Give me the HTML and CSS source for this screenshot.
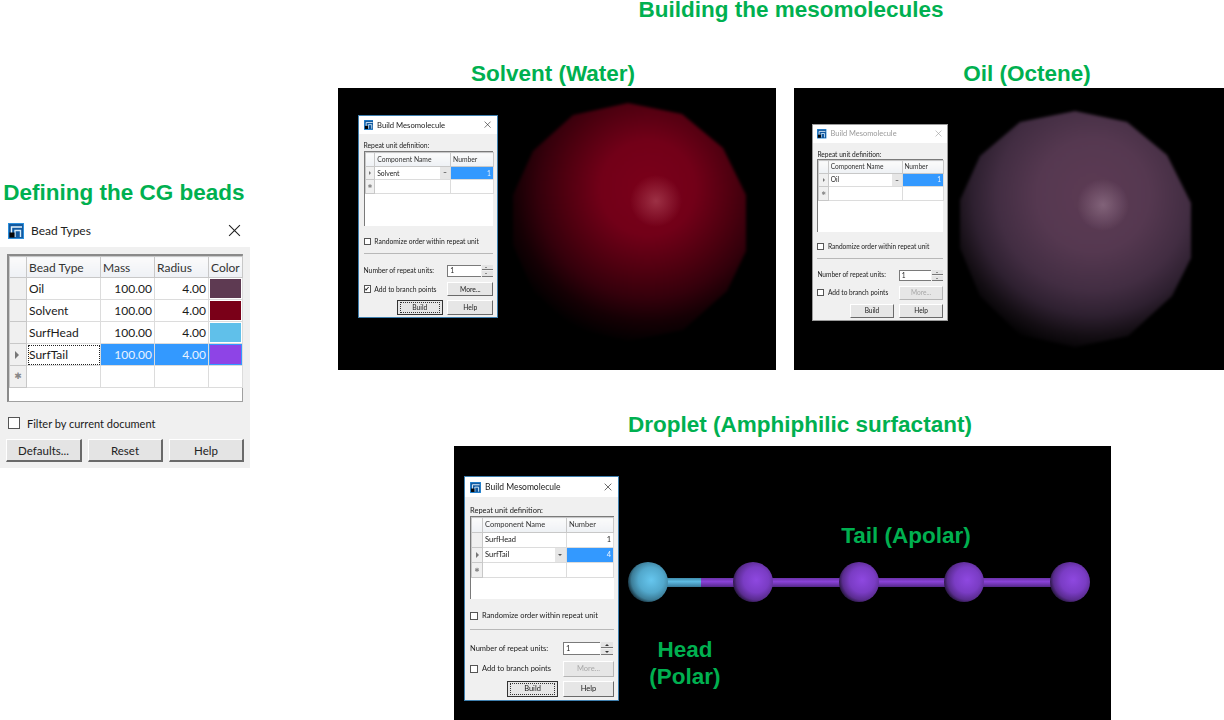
FILE: index.html
```html
<!DOCTYPE html>
<html lang="en">
<head>
  <meta charset="UTF-8" />
  <title>Building the mesomolecules</title>
  <link rel="stylesheet" href="styles.css">
</head>
<body>

  <svg class="sprite" width="0" height="0">
    <symbol id="appIcon" viewBox="0 0 16 16">
      <rect width="16" height="16" fill="#2c8fdc" />
      <rect x="1" y="1" width="14" height="14" fill="#12599f" />
      <path d="M3.5 14V4H14" fill="none" stroke="#e8f4fc" stroke-width="1.4" />
      <path d="M7 14V7.5H12.5V14" fill="none" stroke="#d5ecfa" stroke-width="1.4" />
      <rect x="1.5" y="9.5" width="5" height="5" fill="#050505" />
    </symbol>
    <symbol id="closeIcon" viewBox="0 0 12 12">
      <path d="M1 1L11 11M11 1L1 11" fill="none" stroke="currentColor" stroke-width="1" />
    </symbol>
  </svg>

  <div class="slide">

    <h1 class="caption capMain">Building the mesomolecules</h1>
    <h2 class="caption capBeads">Defining the CG beads</h2>
    <h2 class="caption capSolvent">Solvent (Water)</h2>
    <h2 class="caption capOil">Oil (Octene)</h2>
    <h2 class="caption capDroplet">Droplet (Amphiphilic surfactant)</h2>

    <!-- bead types window -->
    <section class="beadWin">
      <div class="beadTitle">
        <svg class="beadIcon"><use href="#appIcon" /></svg>
        <span class="beadName">Bead Types</span>
        <svg class="beadClose"><use href="#closeIcon" /></svg>
      </div>
      <div class="beadBody">
        <div class="beadGrid">
          <table class="beadTable">
            <colgroup>
              <col class="colHead"><col class="colType"><col class="colMass"><col class="colRadius"><col class="colColor">
            </colgroup>
            <tr class="headRow"><th></th><th>Bead Type</th><th>Mass</th><th>Radius</th><th>Color</th></tr>
            <tr><th></th><td>Oil</td><td class="num">100.00</td><td class="num">4.00</td><td class="swatchCell"><div class="swatch swOil"></div></td></tr>
            <tr><th></th><td>Solvent</td><td class="num">100.00</td><td class="num">4.00</td><td class="swatchCell"><div class="swatch swSolvent"></div></td></tr>
            <tr><th></th><td>SurfHead</td><td class="num">100.00</td><td class="num">4.00</td><td class="swatchCell"><div class="swatch swHead"></div></td></tr>
            <tr><th><span class="rowArrow"></span></th><td class="focusCell">SurfTail</td><td class="num sel">100.00</td><td class="num sel">4.00</td><td class="swatchCell sel"><div class="swatch swTail"></div></td></tr>
            <tr><th><span class="rowNew">✱</span></th><td></td><td></td><td></td><td></td></tr>
          </table>
        </div>
        <label class="filterRow"><span class="check"></span>Filter by current document</label>
        <div class="beadButtons">
          <button class="winBtn">Defaults...</button>
          <button class="winBtn">Reset</button>
          <button class="winBtn">Help</button>
        </div>
      </div>
    </section>

    <!-- solvent viewport -->
    <div class="view viewSolvent">
      <svg class="scene" viewBox="0 0 438 282">
        <defs>
          <radialGradient id="redBody" gradientUnits="userSpaceOnUse" cx="310" cy="100" r="157">
            <stop offset="0" stop-color="#7a0019" />
            <stop offset="0.3" stop-color="#720018" />
            <stop offset="0.55" stop-color="#4c000f" />
            <stop offset="0.7" stop-color="#34000b" />
            <stop offset="0.85" stop-color="#150004" />
            <stop offset="1" stop-color="#000" />
          </radialGradient>
          <radialGradient id="redSpot" gradientUnits="userSpaceOnUse" cx="318" cy="113" r="26">
            <stop offset="0" stop-color="#b04a5c" stop-opacity="0.65" />
            <stop offset="1" stop-color="#b04a5c" stop-opacity="0" />
          </radialGradient>
        </defs>
        <polygon class="ball" fill="url(#redBody)" points="290,15 344,26 385,60 408,107 408,163 389,203 345,242 290,253 235,240 195,203 175,157 175,107 195,63 235,27" />
        <circle cx="318" cy="113" r="26" fill="url(#redSpot)" />
      </svg>
      <div class="slot slotSolvent">
        <div class="dialog dlgSolvent">
          <div class="dlgTitle">
            <svg class="dlgIcon"><use href="#appIcon" /></svg>
            <span class="dlgName">Build Mesomolecule</span>
            <svg class="dlgClose"><use href="#closeIcon" /></svg>
          </div>
          <div class="dlgBody">
            <div class="dlgLabel">Repeat unit definition:</div>
            <div class="unitGrid">
              <table class="unitTable">
                <colgroup><col class="uHead"><col class="uName"><col class="uNum"></colgroup>
                <tr class="headRow"><th></th><th>Component Name</th><th>Number</th></tr>
                <tr><th><span class="rowArrow"></span></th><td class="comboCell">Solvent<span class="comboBtn"></span></td><td class="num sel">1</td></tr>
                <tr><th><span class="rowNew">✱</span></th><td></td><td></td></tr>
              </table>
            </div>
            <label class="checkRow randomRow"><span class="check"></span>Randomize order within repeat unit</label>
            <div class="sep"></div>
            <div class="countRow">
              <span class="countLabel">Number of repeat units:</span>
              <span class="countInput">1</span>
              <span class="spin"><i class="up"></i><i class="down"></i></span>
            </div>
            <div class="branchRow">
              <label class="checkRow"><span class="check checked">✔</span>Add to branch points</label>
              <button class="smallBtn">More...</button>
            </div>
            <div class="actionRow">
              <button class="smallBtn buildBtn focused"><span>Build</span></button>
              <button class="smallBtn">Help</button>
            </div>
          </div>
        </div>
      </div>
    </div>

    <!-- oil viewport -->
    <div class="view viewOil">
      <svg class="scene" viewBox="0 0 430 282">
        <defs>
          <radialGradient id="oilBody" gradientUnits="userSpaceOnUse" cx="299" cy="107" r="160">
            <stop offset="0" stop-color="#5c3a53" />
            <stop offset="0.35" stop-color="#553850" />
            <stop offset="0.6" stop-color="#422d42" />
            <stop offset="0.75" stop-color="#2e2030" />
            <stop offset="0.88" stop-color="#140e14" />
            <stop offset="1" stop-color="#000" />
          </radialGradient>
          <radialGradient id="oilSpot" gradientUnits="userSpaceOnUse" cx="309" cy="117" r="26">
            <stop offset="0" stop-color="#96788e" stop-opacity="0.65" />
            <stop offset="1" stop-color="#96788e" stop-opacity="0" />
          </radialGradient>
        </defs>
        <polygon class="ball" fill="url(#oilBody)" points="281,23 333,34 373,67 397,115 397,170 378,208 334,248 281,259 226,247 186,208 166,160 166,112 186,68 226,34" />
        <circle cx="309" cy="117" r="26" fill="url(#oilSpot)" />
      </svg>
      <div class="slot slotOil">
        <div class="dialog dlgOil">
          <div class="dlgTitle">
            <svg class="dlgIcon"><use href="#appIcon" /></svg>
            <span class="dlgName">Build Mesomolecule</span>
            <svg class="dlgClose"><use href="#closeIcon" /></svg>
          </div>
          <div class="dlgBody">
            <div class="dlgLabel">Repeat unit definition:</div>
            <div class="unitGrid">
              <table class="unitTable">
                <colgroup><col class="uHead"><col class="uName"><col class="uNum"></colgroup>
                <tr class="headRow"><th></th><th>Component Name</th><th>Number</th></tr>
                <tr><th><span class="rowArrow"></span></th><td class="comboCell">Oil<span class="comboBtn"></span></td><td class="num sel">1</td></tr>
                <tr><th><span class="rowNew">✱</span></th><td></td><td></td></tr>
              </table>
            </div>
            <label class="checkRow randomRow"><span class="check"></span>Randomize order within repeat unit</label>
            <div class="sep"></div>
            <div class="countRow">
              <span class="countLabel">Number of repeat units:</span>
              <span class="countInput">1</span>
              <span class="spin"><i class="up"></i><i class="down"></i></span>
            </div>
            <div class="branchRow">
              <label class="checkRow"><span class="check"></span>Add to branch points</label>
              <button class="smallBtn disabled">More...</button>
            </div>
            <div class="actionRow">
              <button class="smallBtn buildBtn"><span>Build</span></button>
              <button class="smallBtn">Help</button>
            </div>
          </div>
        </div>
      </div>
    </div>

    <!-- droplet viewport -->
    <div class="view viewDroplet">
      <svg class="scene" viewBox="0 0 657 274">
        <defs>
          <radialGradient id="cyanBead" cx="0.58" cy="0.45" r="0.58">
            <stop offset="0" stop-color="#66c6ee" />
            <stop offset="0.55" stop-color="#52a8cc" />
            <stop offset="0.85" stop-color="#3c7d98" />
            <stop offset="1" stop-color="#1d3d4c" />
          </radialGradient>
          <radialGradient id="purpleBead" cx="0.58" cy="0.45" r="0.58">
            <stop offset="0" stop-color="#8e48e0" />
            <stop offset="0.55" stop-color="#7a3cc4" />
            <stop offset="0.85" stop-color="#5a2c90" />
            <stop offset="1" stop-color="#2e1a4a" />
          </radialGradient>
          <linearGradient id="purpleBond" x1="0" y1="0" x2="0" y2="1">
            <stop offset="0" stop-color="#6a32a8" />
            <stop offset="0.4" stop-color="#8a42d8" />
            <stop offset="1" stop-color="#54288a" />
          </linearGradient>
          <linearGradient id="cyanBond" x1="0" y1="0" x2="0" y2="1">
            <stop offset="0" stop-color="#3f8cac" />
            <stop offset="0.4" stop-color="#5fbce4" />
            <stop offset="1" stop-color="#37799a" />
          </linearGradient>
        </defs>
        <rect x="247" y="132" width="369" height="9" fill="url(#purpleBond)" />
        <rect x="194" y="132" width="53" height="9" fill="url(#cyanBond)" />
        <circle cx="194" cy="136" r="20" fill="url(#cyanBead)" />
        <circle cx="299" cy="136" r="20" fill="url(#purpleBead)" />
        <circle cx="405" cy="136" r="20" fill="url(#purpleBead)" />
        <circle cx="510" cy="136" r="20" fill="url(#purpleBead)" />
        <circle cx="616" cy="136" r="20" fill="url(#purpleBead)" />
      </svg>
      <div class="slot slotDroplet">
        <div class="dialog dlgDroplet">
          <div class="dlgTitle">
            <svg class="dlgIcon"><use href="#appIcon" /></svg>
            <span class="dlgName">Build Mesomolecule</span>
            <svg class="dlgClose"><use href="#closeIcon" /></svg>
          </div>
          <div class="dlgBody">
            <div class="dlgLabel">Repeat unit definition:</div>
            <div class="unitGrid">
              <table class="unitTable">
                <colgroup><col class="uHead"><col class="uName"><col class="uNum"></colgroup>
                <tr class="headRow"><th></th><th>Component Name</th><th>Number</th></tr>
                <tr><th></th><td>SurfHead</td><td class="num">1</td></tr>
                <tr><th><span class="rowArrow"></span></th><td class="comboCell">SurfTail<span class="comboBtn"></span></td><td class="num sel">4</td></tr>
                <tr><th><span class="rowNew">✱</span></th><td></td><td></td></tr>
              </table>
            </div>
            <label class="checkRow randomRow"><span class="check"></span>Randomize order within repeat unit</label>
            <div class="sep"></div>
            <div class="countRow">
              <span class="countLabel">Number of repeat units:</span>
              <span class="countInput">1</span>
              <span class="spin"><i class="up"></i><i class="down"></i></span>
            </div>
            <div class="branchRow">
              <label class="checkRow"><span class="check"></span>Add to branch points</label>
              <button class="smallBtn disabled">More...</button>
            </div>
            <div class="actionRow">
              <button class="smallBtn buildBtn focused"><span>Build</span></button>
              <button class="smallBtn">Help</button>
            </div>
          </div>
        </div>
      </div>
      <div class="caption capTail">Tail (Apolar)</div>
      <div class="caption capHead">Head<br>(Polar)</div>
    </div>

  </div>

</body>
</html>
```

FILE: styles.css
```css
body {
  margin: 0;
  background-color: #fff;
  font-family: Lato, 'Noto Sans', sans-serif;
  color: #1a1a1a;
}

.sprite {
  position: absolute;
}

/* the slide is a free canvas: captions and screenshots sit where they were pasted */
.slide {
  position: relative;
  width: 1224px;
  height: 720px;
  overflow: hidden;
}

.caption {
  position: absolute;
  margin: 0;
  font-family: 'Liberation Sans', Arial, sans-serif;
  font-size: 22.5px;
  font-weight: bold;
  line-height: 27px;
  color: #00b050;
  white-space: nowrap;
  text-align: center;
}

.capMain { left: 591px; top: 0; width: 400px; line-height: 19px; }
.capBeads { left: 0; top: 179px; width: 248px; }
.capSolvent { left: 453px; top: 60px; width: 200px; }
.capOil { left: 927px; top: 60px; width: 200px; }
.capDroplet { left: 600px; top: 411px; width: 400px; }
.capTail { left: 352px; top: 76px; width: 200px; }
.capHead { left: 181px; top: 190px; width: 100px; }

/* bead types window */
.beadWin {
  position: absolute;
  left: 0;
  top: 218px;
  width: 250px;
  height: 250px;
  font-size: 12px;
}

.beadTitle {
  height: 29px;
  display: flex;
  align-items: center;
  padding: 0 8px 4px;
  box-sizing: border-box;
  background-color: #fff;
}

.beadIcon {
  width: 16px;
  height: 16px;
  flex: none;
}

.beadName {
  flex: 1;
  margin-left: 7px;
  color: #222;
}

.beadClose {
  width: 13px;
  height: 13px;
  margin-right: 1px;
  color: #222;
}

.beadBody {
  height: 221px;
  padding: 7px 7px 0 7px;
  background-color: #f0f0f0;
  box-sizing: border-box;
}

.beadGrid {
  width: 236px;
  height: 148px;
  box-sizing: border-box;
  background-color: #fff;
  border: 1px solid #a0a0a0;
  border-top: 2px solid #8a8a8a;
  border-left: 2px solid #8a8a8a;
}

table {
  border-collapse: collapse;
  table-layout: fixed;
}

.beadTable {
  width: 233px;
}

.colHead { width: 17px; }
.colType { width: 74px; }
.colMass { width: 54px; }
.colRadius { width: 54px; }
.colColor { width: 34px; }

.beadTable tr { height: 22px; }
.beadTable .headRow { height: 21px; }

th, td {
  padding: 0 2px;
  font-weight: normal;
  text-align: left;
  border: 1px solid #dcdcdc;
  white-space: nowrap;
  overflow: hidden;
  box-sizing: border-box;
}

th {
  background-color: #f0f0f0;
  border-color: #c8c8c8;
}

.headRow th {
  background: linear-gradient(#fbfbfb, #eef1f5);
  color: #333;
}

.num { text-align: right; }

.sel {
  background-color: #3399ff;
  color: #e8f3ff;
}

.focusCell {
  outline: 1px dotted #222;
  outline-offset: -2px;
}

.swatchCell {
  padding: 1px;
}

.swatch {
  height: 19px;
}

.swOil { background-color: #5e3a52; }
.swSolvent { background-color: #7a0018; }
.swHead { background-color: #60c0ea; }
.swTail { background-color: #8e44e6; }

.rowArrow {
  display: block;
  width: 0;
  height: 0;
  margin-left: 3px;
  border-left: 4px solid #777;
  border-top: 4px solid transparent;
  border-bottom: 4px solid transparent;
}

.rowNew {
  display: block;
  font-family: 'DejaVu Sans', sans-serif;
  font-size: 9px;
  line-height: 9px;
  color: #888;
  text-align: center;
}

.filterRow {
  display: flex;
  align-items: center;
  margin-top: 15px;
  height: 12px;
  font-size: 11px;
  white-space: nowrap;
}

.check {
  flex: none;
  box-sizing: border-box;
  background-color: #fff;
  border: 1px solid #555;
}

.filterRow .check {
  width: 12px;
  height: 12px;
  margin: 0 7px 0 1px;
}

.beadButtons {
  display: grid;
  grid-template-columns: 76px 75px 75px;
  column-gap: 6px;
  margin: 10px 0 0 -1px;
}

.winBtn {
  height: 23px;
  padding: 0;
  font: inherit;
  font-size: 11.5px;
  color: #222;
  background-color: #e4e4e4;
  border: 1px solid #fff;
  border-right: 2px solid #6a6a6a;
  border-bottom: 2px solid #6a6a6a;
}

/* viewports */
.view {
  position: absolute;
  background-color: #000;
}

.viewSolvent { left: 338px; top: 88px; width: 438px; height: 282px; }
.viewOil { left: 794px; top: 88px; width: 430px; height: 282px; }
.viewDroplet { left: 454px; top: 446px; width: 657px; height: 274px; }

.scene {
  display: block;
  width: 100%;
  height: 100%;
}

.ball {
  filter: blur(1.5px);
}

.slot { position: absolute; }
.slotSolvent { left: 20px; top: 27px; }
.slotOil { left: 18px; top: 36px; }
.slotDroplet { left: 10px; top: 30px; }

/* build mesomolecule dialog, drawn at droplet size and zoomed for the other two */
.dialog {
  width: 155px;
  height: 225px;
  box-sizing: border-box;
  background-color: #f0f0f0;
  border: 1px solid #3f7fae;
  font-size: 7.5px;
  line-height: 12px;
  filter: blur(0.25px);
}

.dlgSolvent { zoom: 0.903; }
.dlgOil { zoom: 0.877; border-color: #9a9a9a; }

.dlgTitle {
  height: 20px;
  display: flex;
  align-items: center;
  padding: 0 6px 0 5px;
  background-color: #fff;
}

.dlgIcon {
  width: 11px;
  height: 11px;
  flex: none;
}

.dlgName {
  flex: 1;
  margin-left: 4px;
  font-size: 8.5px;
}

.dlgClose {
  width: 8px;
  height: 8px;
  color: #222;
}

.dlgOil .dlgName,
.dlgOil .dlgClose {
  color: #9a9a9a;
}

.dlgBody {
  padding: 8px 4px 0 5px;
}

.dlgLabel {
  height: 11px;
  line-height: 11px;
}

.unitGrid {
  height: 83px;
  box-sizing: border-box;
  background-color: #fff;
  border-top: 1px solid #7a7a7a;
  border-left: 1px solid #7a7a7a;
}

.unitTable {
  width: 142px;
}

.uHead { width: 11px; }
.uName { width: 84px; }
.uNum { width: 47px; }

.unitTable tr { height: 15px; }

.comboCell {
  position: relative;
}

.comboBtn {
  position: absolute;
  right: 0;
  top: 0;
  width: 11px;
  height: 14px;
  background-color: #e6e6e6;
}

.comboBtn::after {
  content: "";
  position: absolute;
  left: 3px;
  top: 6px;
  border-top: 2px solid #555;
  border-left: 2.5px solid transparent;
  border-right: 2.5px solid transparent;
}

.unitTable .rowArrow {
  margin-left: 2px;
  border-left-width: 3px;
  border-top-width: 3px;
  border-bottom-width: 3px;
}

.unitTable .rowNew {
  font-size: 6px;
  line-height: 6px;
}

.checkRow {
  display: flex;
  align-items: center;
  white-space: nowrap;
}

.checkRow .check {
  width: 8px;
  height: 8px;
  margin: 0 4px 0 0;
}

.checked {
  font-size: 7px;
  line-height: 7px;
  text-align: center;
  font-family: 'DejaVu Sans', sans-serif;
  color: #111;
}

.randomRow {
  height: 12px;
  margin-top: 11px;
}

.sep {
  height: 0;
  margin-top: 7px;
  border-top: 1px solid #b8b8b8;
}

.countRow {
  display: flex;
  align-items: center;
  height: 13px;
  margin-top: 12px;
}

.countLabel {
  width: 93px;
  white-space: nowrap;
}

.countInput {
  width: 37px;
  height: 13px;
  box-sizing: border-box;
  padding-left: 2px;
  background-color: #fff;
  border: 1px solid #7a7a7a;
  border-right: none;
  line-height: 11px;
}

.spin {
  display: flex;
  flex-direction: column;
  justify-content: space-between;
  width: 12px;
  height: 13px;
  margin-left: 1px;
}

.spin i {
  display: block;
  height: 6px;
  background-color: #e4e4e4;
  border-bottom: 1px solid #777;
  box-sizing: border-box;
  position: relative;
}

.spin i::after {
  content: "";
  position: absolute;
  left: 4px;
  top: 2px;
  border-left: 2px solid transparent;
  border-right: 2px solid transparent;
}

.spin .up::after { border-bottom: 2px solid #333; }
.spin .down::after { border-top: 2px solid #333; }

.branchRow {
  display: flex;
  justify-content: space-between;
  align-items: center;
  height: 15px;
  margin-top: 6px;
}

.actionRow {
  display: flex;
  justify-content: flex-end;
  gap: 5px;
  margin-top: 5px;
}

.smallBtn {
  width: 51px;
  height: 16px;
  padding: 0;
  font: inherit;
  color: #222;
  background-color: #e6e6e6;
  border: 1px solid #fff;
  border-right: 1px solid #6a6a6a;
  border-bottom: 1px solid #6a6a6a;
}

.disabled {
  color: #a8a8a8;
  border-right-color: #b5b5b5;
  border-bottom-color: #b5b5b5;
}

.focused {
  border: 1px solid #333;
}

.focused span {
  display: block;
  margin: 1px 2px;
  line-height: 10px;
  border: 1px dotted #333;
}
```
